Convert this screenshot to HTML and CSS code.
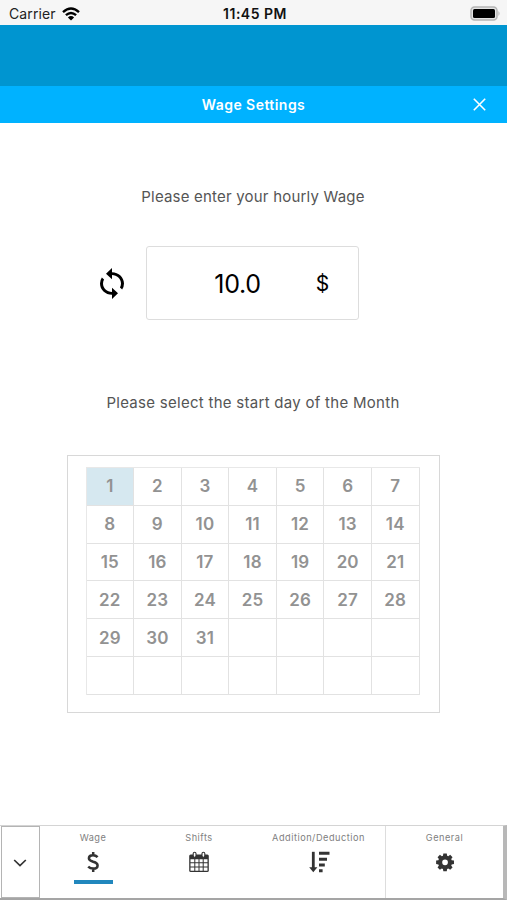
FILE: index.html
```html
<!DOCTYPE html>
<html lang="en">
<head>
<meta charset="utf-8">
<title>Wage Settings</title>
<link rel="stylesheet" href="styles.css">
</head>
<body>
<header class="status">
  <div class="carrier"><span>Carrier</span>
    <svg width="18" height="14" viewBox="0 0 18 14" fill="none" stroke="#000" stroke-width="2.4"><path d="M1 5.2Q9-2 17 5.2M3.9 8.2Q9 3.6 14.1 8.2"/><path d="M9 13.6 5.9 10.4Q9 7.8 12.1 10.4Z" fill="#000" stroke="none"/></svg>
  </div>
  <span class="time">11:45 PM</span>
  <svg class="battery" width="31" height="15" viewBox="0 0 31 15"><rect x="1" y="1" width="26" height="13" rx="3.5" fill="#e4e4e4" stroke="#b5b5b5" stroke-width="1.5"/><rect x="3" y="3" width="22" height="9" rx="1.5"/><path d="M28.5 5q2 2.500 0 5z" fill="#aaa"/></svg>
</header>
<div class="banner"></div>
<div class="title">
  <h1>Wage Settings</h1>
  <svg class="close" width="13" height="13" viewBox="0 0 13 13" stroke="#fff" stroke-width="1.6"><path d="M.8.8 12.200 12.200M12.200.8.8 12.200"/></svg>
</div>
<main>
  <p class="prompt hourly">Please enter your hourly Wage</p>
  <div class="wage-row">
    <svg class="sync" width="24" height="31" viewBox="4 1 16 22" preserveAspectRatio="none"><path d="M12 4V1L8 5l4 4V6c3.310 0 6 2.690 6 6 0 1.010-.25 1.970-.7 2.800l1.460 1.460A7.930 7.930 0 0 0 20 12c0-4.420-3.580-8-8-8zm0 14c-3.310 0-6-2.690-6-6 0-1.010.25-1.970.7-2.800L5.240 7.740A7.930 7.930 0 0 0 4 12c0 4.420 3.580 8 8 8v3l4-4-4-4v3z"/></svg>
    <div class="field"><span class="amount">10.0</span><span class="currency">$</span></div>
  </div>
  <p class="prompt start">Please select the start day of the Month</p>
  <div class="calendar">
    <div class="days">
      <span class="selected">1</span><span>2</span><span>3</span><span>4</span><span>5</span><span>6</span><span>7</span>
      <span>8</span><span>9</span><span>10</span><span>11</span><span>12</span><span>13</span><span>14</span>
      <span>15</span><span>16</span><span>17</span><span>18</span><span>19</span><span>20</span><span>21</span>
      <span>22</span><span>23</span><span>24</span><span>25</span><span>26</span><span>27</span><span>28</span>
      <span>29</span><span>30</span><span>31</span><span></span><span></span><span></span><span></span>
      <span></span><span></span><span></span><span></span><span></span><span></span><span></span>
    </div>
  </div>
</main>
<nav>
  <div class="collapse"><svg width="14" height="8" viewBox="0 0 14 8" fill="none" stroke="#333" stroke-width="1.700"><path d="M1.200 1 7 6.600 12.800 1"/></svg></div>
  <div class="tab active"><span>Wage</span>
    <svg width="20" height="22" viewBox="0 0 20 22" fill="none" stroke="#333" stroke-width="2.500"><path d="M14.600 6.200Q12.800 4.300 10 4.300C7.300 4.300 5.900 5.600 5.900 7.300C5.900 9.300 7.500 9.900 10.200 10.800C13 11.600 14.600 12.500 14.600 14.400C14.600 16.400 12.900 17.600 10.300 17.600Q7.200 17.600 5.200 15.600M10.200 1V4.500M10.200 17.300V21"/></svg>
  </div>
  <div class="tab"><span>Shifts</span>
    <svg width="20" height="22" viewBox="0 0 20 22"><rect x=".2" y="3.500" width="19.600" height="17.500" rx="1.500" fill="#333"/><path fill="#fff" d="M1.500 8.200h3.800v3H1.500zM6.300 8.200h3.200v3H6.300zM10.500 8.200h3.200v3h-3.200zM14.700 8.200h3.800v3h-3.800zM1.500 12.200h3.800v3.300H1.500zM6.300 12.200h3.200v3.300H6.300zM10.500 12.200h3.200v3.300h-3.200zM14.700 12.200h3.800v3.300h-3.800zM1.500 16.500h3.800v3.200H1.500zM6.300 16.500h3.200v3.200H6.300zM10.500 16.500h3.200v3.200h-3.200zM14.700 16.500h3.800v3.200h-3.800z"/><g fill="#fff" stroke="#333" stroke-width="1.100"><rect x="4.200" y="1.200" width="2.800" height="5" rx="1.400"/><rect x="13" y="1.200" width="2.800" height="5" rx="1.400"/></g></svg>
  </div>
  <div class="tab wide"><span>Addition/Deduction</span>
    <svg width="22" height="22" viewBox="0 0 22 22" fill="none" stroke="#333"><path stroke-width="2.800" d="M5.300.8V18"/><path d="M1.200 16.300H9.400L5.300 21.200Z" fill="#333" stroke="none"/><path stroke-width="2.900" d="M11 2.300H21.500M11 8.200H19M11 14H16.800M11 19.800H14.600"/></svg>
  </div>
  <div class="tab general"><span>General</span>
    <svg width="20" height="22" viewBox="0 0 20 22"><path fill="#333" fill-rule="evenodd" d="M8.200 2.200h3.600l.4 2.400 1.200.5 2-1.400 2.500 2.500-1.400 2 .5 1.200 2.400.4v3.600l-2.400.4-.5 1.200 1.400 2-2.500 2.500-2-1.400-1.200.5-.4 2.400H8.200l-.4-2.400-1.200-.5-2 1.400-2.500-2.500 1.400-2-.5-1.200-2.400-.4V9.800L3 9.400l.5-1.200-1.400-2 2.500-2.500 2 1.400 1.200-.5zM10 8.600a3 3 0 1 0 0 6 3 3 0 0 0 0-6z" transform="translate(.55 .3) scale(.95)"/></svg>
  </div>
</nav>
</body>
</html>
```
FILE: styles.css
```css
* { box-sizing: border-box; }
body {
  margin: 0;
  height: 900px;
  display: flex;
  flex-direction: column;
  overflow: hidden;
  background: #fff;
  color: #000;
  font-family: Inter, "Liberation Sans", sans-serif;
}
svg { display: block; flex: none; }
h1, p { margin: 0; }
.status {
  height: 25px;
  flex: none;
  display: grid;
  grid-template-columns: 1fr auto 1fr;
  align-items: center;
  padding: 2px 6px 0 9px;
  background: #f6f6f6;
}
.carrier {
  display: flex;
  align-items: center;
  gap: 6px;
  font-size: 14px;
  letter-spacing: .1px;
  color: #222;
}
.time { font-size: 14px; font-weight: 600; letter-spacing: .5px; color: #111; }
.battery { justify-self: end; }
.banner { height: 61px; flex: none; background: #0095d0; }
.title {
  height: 37px;
  flex: none;
  display: grid;
  grid-template-columns: 1fr auto 1fr;
  align-items: center;
  padding: 0 21px;
  background: #00b2ff;
  color: #fff;
}
.title h1 { grid-column: 2; font-size: 14px; font-weight: 600; letter-spacing: .45px; }
.close { justify-self: end; }
main {
  flex: 1;
  display: flex;
  flex-direction: column;
  align-items: center;
  padding-right: 1px;
}
.prompt { color: #555; font-size: 15px; line-height: 20px; letter-spacing: .2px; white-space: nowrap; }
.hourly { margin-top: 64px; }
.wage-row {
  width: 307px;
  margin-top: 39px;
  display: flex;
  align-items: center;
  gap: 22px;
  align-self: flex-start;
  margin-left: 100px;
}
.field {
  width: 213px;
  height: 74px;
  display: flex;
  align-items: center;
  padding-top: 1px;
  border: 1px solid #ddd;
  border-radius: 3px;
}
.amount { width: 102px; margin-left: 41px; text-align: center; font-size: 25px; letter-spacing: -.3px; }
.currency { width: 73px; text-align: center; font-size: 21px; }
.start { margin-top: 73px; letter-spacing: .28px; }
.calendar {
  width: 373px;
  height: 258px;
  margin-top: 42px;
  padding: 11px 19px 0 18px;
  border: 1px solid #d8d8d8;
}
.days {
  width: 334px;
  height: 228px;
  display: grid;
  grid-template-columns: repeat(7, 1fr);
  grid-template-rows: repeat(6, 1fr);
  border-top: 1px solid #e8e8e8;
  border-left: 1px solid #e8e8e8;
}
.days span {
  display: flex;
  align-items: center;
  justify-content: center;
  border-right: 1px solid #e2e2e2;
  border-bottom: 1px solid #e2e2e2;
  color: #929292;
  font-size: 17px;
  font-weight: 600;
  letter-spacing: .1px;
}
.days .selected { background: #d6e8f0; }
nav {
  height: 75px;
  flex: none;
  display: flex;
  padding-left: 1px;
  border-top: 1px solid #d4d4d4;
  border-right: 4px solid #b8b8b8;
  border-bottom: 2px solid #a5a5a5;
}
.collapse {
  width: 39px;
  flex: none;
  display: flex;
  align-items: center;
  justify-content: center;
  padding: 1px 1px 0 0;
  border: 1px solid #b4b4b4;
}
.tab {
  width: 106px;
  flex: none;
  display: flex;
  flex-direction: column;
  align-items: center;
  padding-top: 6px;
  gap: 7px;
  color: #808080;
  font-size: 9.2px;
  line-height: 12px;
  letter-spacing: .5px;
}
.active::after { content: ""; width: 39px; height: 4px; background: #2187bd; }
.wide { width: 133px; }
.general { flex: 1; border-left: 1px solid #ddd; }
```
